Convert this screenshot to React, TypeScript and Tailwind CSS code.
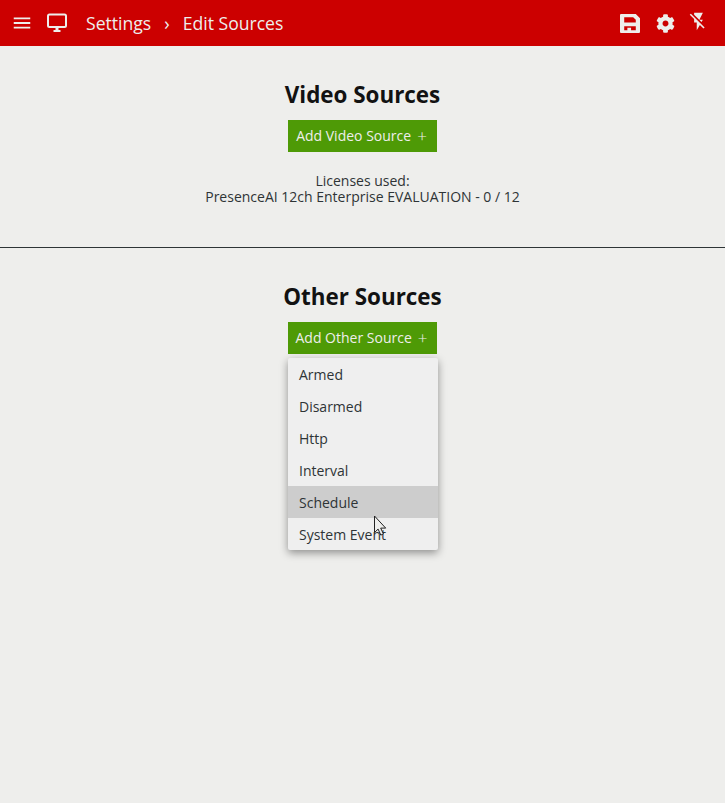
import React from "react";
import { MdMenu, MdFlashOff } from "react-icons/md";
import { FaCog } from "react-icons/fa";

const items = ["Armed", "Disarmed", "Http", "Interval", "Schedule", "System Event"];

function AddButton({ label }: { label: string }) {
  return (
    <button className="flex h-8 w-[149px] items-center justify-center gap-[6px] bg-[#4e9a06] pr-[2px] text-[14px] font-medium leading-8 text-[#eeeeec]">
      <span>{label}</span>
      <span className="text-[17px] font-light">+</span>
    </button>
  );
}

export default function App() {
  return (
    <div className="relative min-h-[803px] bg-[#eeeeec] text-[#2e3436] [font-family:'Open_Sans',sans-serif]">
      <header className="flex h-[46px] items-center bg-[#cc0000] text-[#eeeeec]">
        <MdMenu className="ml-[11px] h-[22px] w-[22px]" />
        <svg className="ml-[13px] h-[22px] w-[22px]" viewBox="0 0 22 22" fill="none">
          <rect x="2" y="2.5" width="18" height="12.5" rx="1.5" stroke="currentColor" strokeWidth="2" />
          <path d="M11 16v2" stroke="currentColor" strokeWidth="3" />
          <path d="M7.5 19h7" stroke="currentColor" strokeWidth="2" />
        </svg>
        <div className="ml-[18px] flex items-center text-[17.6px] leading-6">
          <span>Settings</span>
          <span className="mx-[13px] text-[18px]">›</span>
          <span>Edit Sources</span>
        </div>
        <div className="ml-auto flex items-center pr-[16px]">
          <svg className="h-[19px] w-[20px]" viewBox="0 0 19 18" fill="currentColor">
            <path
              fillRule="evenodd"
              d="M1 0H15L19 4V17a1 1 0 0 1-1 1H1a1 1 0 0 1-1-1V1a1 1 0 0 1 1-1z M4 3v5h11V5.5L12.5 3z M4 11.5V15.5H7v-2.5h3.5v2.5H15V11.5z"
            />
          </svg>
          <FaCog className="ml-[16px] h-[19px] w-[19px]" />
          <MdFlashOff className="mb-[3px] ml-[13px] h-[21px] w-[21px]" />
        </div>
      </header>

      <section className="flex h-[202px] flex-col items-center border-b border-[#2e3436] pt-[33px]">
        <h2 className="text-[22.4px] font-bold leading-[32px] text-[#121212]">Video Sources</h2>
        <div className="mt-[9px]">
          <AddButton label="Add Video Source" />
        </div>
        <p className="mt-[21px] text-center text-[14px] font-normal leading-[16px] text-[#2e3436]">
          Licenses used:
          <br />
          PresenceAI 12ch Enterprise EVALUATION - 0 / 12
        </p>
      </section>

      <section className="flex flex-col items-center pt-[33px]">
        <h2 className="text-[22.4px] font-bold leading-[32px] text-[#121212]">Other Sources</h2>
        <div className="relative mt-[9px]">
          <AddButton label="Add Other Source" />
          <ul className="absolute left-0 top-[36px] w-[150px] overflow-hidden rounded-[2px] bg-[#efefef] shadow-[0_3px_8px_rgba(0,0,0,0.4)]">
            {items.map((item) => (
              <li
                key={item}
                className={`h-8 pl-[11px] text-[14px] leading-[34px] text-[#2e3436] ${item === "Schedule" ? "bg-[#cdcdcd]" : ""}`}
              >
                {item}
              </li>
            ))}
          </ul>
          <svg className="absolute left-[85px] top-[193px]" width="14" height="22" viewBox="0 0 14 22">
            <path d="M1.5 1v16.5l3.6-3.4 2.7 6 2.6-1.2-2.7-5.8h5z" fill="#eeeeec" stroke="#222" strokeWidth="1" />
          </svg>
        </div>
      </section>
    </div>
  );
}
